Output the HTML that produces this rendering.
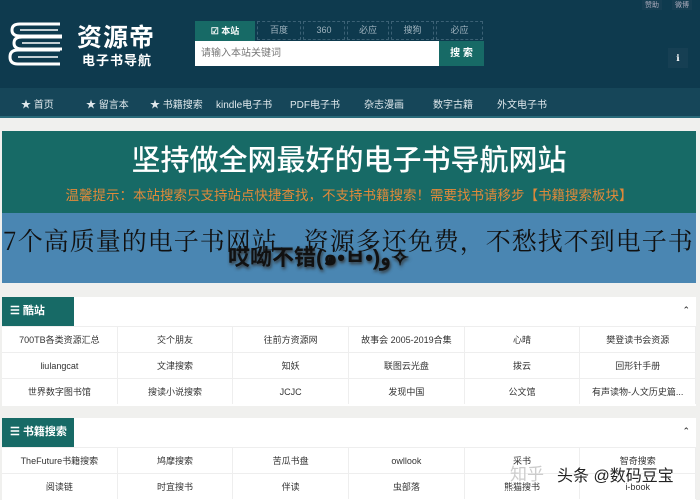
<!DOCTYPE html>
<html><head><meta charset="utf-8"><style>
*{margin:0;padding:0;box-sizing:border-box}
body{width:700px;height:500px;overflow:hidden;background:#f0f0ee;font-family:"Liberation Sans","Noto Sans CJK SC",sans-serif;position:relative}
.hd{position:absolute;left:0;top:0;width:700px;height:88px;background:#0e3a4e}
.nav{position:absolute;left:0;top:88px;width:700px;height:30px;background:#164659;border-bottom:2px solid #2a6a7a}
.nav span{position:absolute;top:8px;font-size:10px;color:#dfe8ec}
.tab{position:absolute;top:21px;height:19px;border:1px dashed #3b6175;color:#9fb3be;font-size:9px;text-align:center;line-height:17px}
.ban{position:absolute;left:2px;top:131px;width:694px;height:82px;background:#176a66}
.blue{position:absolute;left:2px;top:213px;width:694px;height:70px;background:#4a86b2}
.pn{position:absolute;left:2px;width:694px;background:#fff}
.ph{position:absolute;left:0;top:0;width:72px;height:29px;background:#176a66;color:#fff;font-size:11px;font-weight:bold;line-height:29px;padding-left:8px}
.row{position:absolute;left:0;width:694px;height:26px;display:flex;border-top:1px solid #eee}
.row div{flex:1;text-align:center;font-size:9px;color:#333;line-height:26px;border-right:1px solid #eee;white-space:nowrap;overflow:hidden}
.car{position:absolute;right:6px;top:8px;font-size:9px;color:#222}
</style></head><body>
<div class="hd">
 <svg style="position:absolute;left:8px;top:20px" width="62" height="48" viewBox="0 0 62 48"><g fill="none" stroke="#fff" stroke-width="3" stroke-linejoin="round"><path d="M52 4H12Q4 4 4 10Q4 16 12 16H52"/><path d="M14 16H54"/><path d="M54 17H14Q6 17 6 23Q6 29 14 29H54"/><path d="M52 30H10Q2 30 2 37Q2 44 10 44H52"/></g><g stroke="#fff" stroke-width="1.5"><path d="M12 10H50M14 23H52M10 37H50"/></g></svg>
 <div style="position:absolute;left:77px;top:18px;font-size:25px;font-weight:bold;color:#fff;letter-spacing:1px">资源帝</div>
 <div style="position:absolute;left:82px;top:50px;font-size:13px;font-weight:bold;color:#fff;letter-spacing:1px">电子书导航</div>
 <div style="position:absolute;left:195px;top:21px;width:60px;height:20px;background:#176a66;color:#fff;font-size:9px;font-weight:bold;text-align:center;line-height:20px">☑ 本站</div>
 <div class="tab" style="left:257px;width:44px">百度</div>
 <div class="tab" style="left:303px;width:42px">360</div>
 <div class="tab" style="left:347px;width:42px">必应</div>
 <div class="tab" style="left:391px;width:43px">搜狗</div>
 <div class="tab" style="left:436px;width:47px">必应</div>
 <div style="position:absolute;left:195px;top:41px;width:244px;height:25px;background:#fff;color:#777;font-size:10px;line-height:25px;padding-left:6px">请输入本站关键词</div>
 <div style="position:absolute;left:439px;top:41px;width:45px;height:25px;background:#176a66;color:#fff;font-size:10px;font-weight:bold;text-align:center;line-height:25px">搜 索</div>
 <div style="position:absolute;left:642px;top:0;font-size:7px;color:#aab;background:#163e52;padding:0 3px">赞助</div>
 <div style="position:absolute;left:672px;top:0;font-size:7px;color:#aab;background:#163e52;padding:0 3px">微博</div>
 <div style="position:absolute;left:668px;top:48px;width:20px;height:20px;background:#163f53;color:#fff;font-size:9px;text-align:center;line-height:20px">ℹ</div>
</div>
<div class="nav">
 <span style="left:21px">★ 首页</span><span style="left:86px">★ 留言本</span><span style="left:150px">★ 书籍搜索</span><span style="left:216px">kindle电子书</span><span style="left:290px">PDF电子书</span><span style="left:364px">杂志漫画</span><span style="left:433px">数字古籍</span><span style="left:497px">外文电子书</span>
</div>
<div class="ban">
 <div style="position:absolute;left:0;width:694px;top:6px;text-align:center;font-size:29px;font-weight:500;color:#fff">坚持做全网最好的电子书导航网站</div>
 <div style="position:absolute;left:0;width:694px;top:53px;text-align:center;font-size:13.5px;color:#e0893a;white-space:nowrap">温馨提示：本站搜索只支持站点快捷查找，不支持书籍搜索！需要找书请移步【书籍搜索板块】</div>
</div>
<div class="blue"></div>
<div style="position:absolute;left:3px;top:222px;font-size:25px;font-family:'Noto Serif CJK SC',serif;color:#111;white-space:nowrap;letter-spacing:1px">7个高质量的电子书网站，资源多还免费，不愁找不到电子书</div>
<div style="position:absolute;left:228px;top:240px;font-size:22px;font-weight:bold;color:#111;white-space:nowrap;text-shadow:1px 2px 3px #333">哎呦不错(๑•̀ㅂ•́)و✧</div>
<div class="pn" style="top:297px;height:109px">
 <div class="ph">☰ 酷站</div><div class="car">⌃</div>
 <div class="row" style="top:29px"><div>700TB各类资源汇总</div><div>交个朋友</div><div>往前方资源网</div><div>故事会 2005-2019合集</div><div>心晴</div><div>樊登读书会资源</div></div>
 <div class="row" style="top:55px"><div>liulangcat</div><div>文津搜索</div><div>知妖</div><div>联图云光盘</div><div>拨云</div><div>回形针手册</div></div>
 <div class="row" style="top:81px"><div>世界数字图书馆</div><div>搜读小说搜索</div><div>JCJC</div><div>发现中国</div><div>公文馆</div><div>有声读物-人文历史篇...</div></div>
</div>
<div class="pn" style="top:418px;height:82px">
 <div class="ph">☰ 书籍搜索</div><div class="car">⌃</div>
 <div class="row" style="top:29px"><div>TheFuture书籍搜索</div><div>鸠摩搜索</div><div>苦瓜书盘</div><div>owllook</div><div>采书</div><div>智奇搜索</div></div>
 <div class="row" style="top:55px"><div>阅读链</div><div>时宜搜书</div><div>伴读</div><div>虫部落</div><div>熊猫搜书</div><div>i-book</div></div>
</div>
<div style="position:absolute;left:510px;top:460px;font-size:17px;color:#ccc">知乎</div>
<div style="position:absolute;left:557px;top:462px;font-size:16px;color:#222;text-shadow:0 0 2px #fff,0 0 2px #fff">头条 @数码豆宝</div>
</body></html>
